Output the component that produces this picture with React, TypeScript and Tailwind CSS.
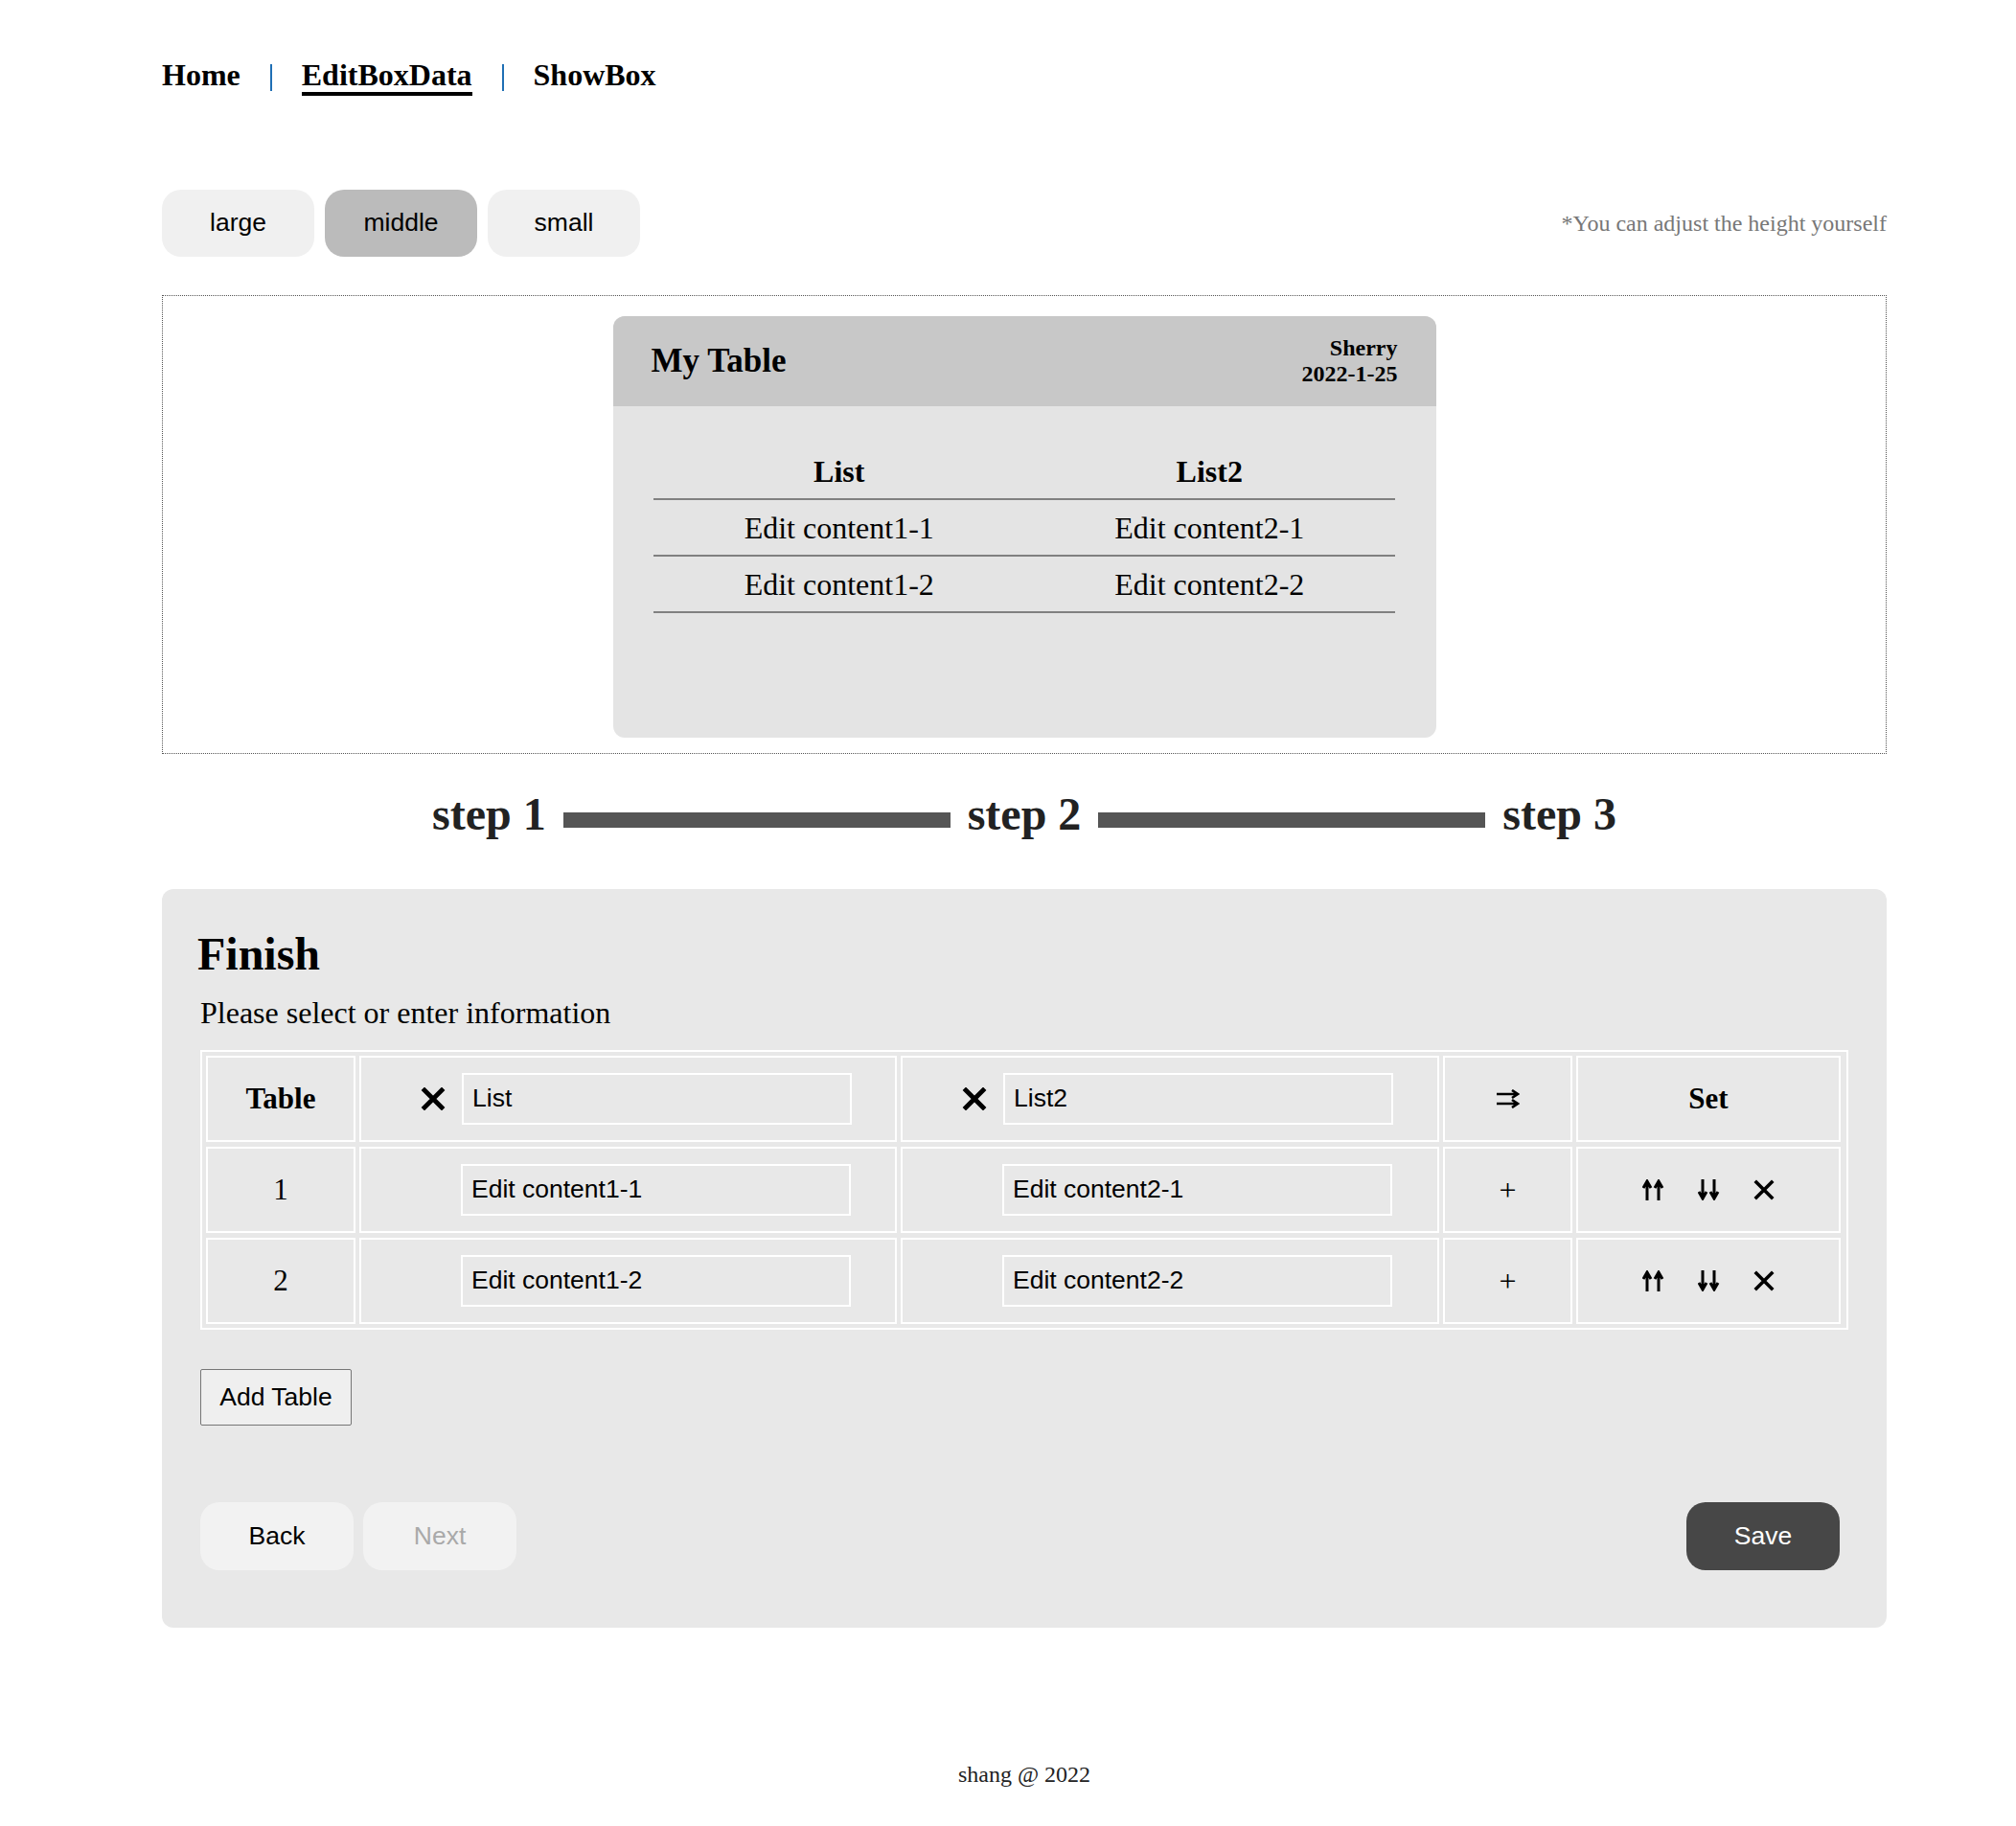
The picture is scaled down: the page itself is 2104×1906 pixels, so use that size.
import React from "react";

const rows = [
  { id: 1, a: "Edit content1-1", b: "Edit content2-1" },
  { id: 2, a: "Edit content1-2", b: "Edit content2-2" },
];

function BoldX({ size = 26 }: { size?: number }) {
  return (
    <svg width={size} height={size - 2} viewBox="0 0 26 24">
      <path d="M4 3 L22 21 M22 3 L4 21" stroke="#000" strokeWidth="4.8" strokeLinecap="square" fill="none" />
    </svg>
  );
}

function SmallX() {
  return (
    <svg width="22" height="22" viewBox="0 0 22 22">
      <path d="M3 3 L19 19 M19 3 L3 19" stroke="#000" strokeWidth="3.6" strokeLinecap="square" fill="none" />
    </svg>
  );
}

function UpUp() {
  return (
    <svg width="23" height="22" viewBox="0 0 23 22">
      <path d="M5 22 V3 M17 22 V3 M1 9 L5 2 L9 9 M13 9 L17 2 L21 9" stroke="#000" strokeWidth="3" fill="none" />
    </svg>
  );
}

function DownDown() {
  return (
    <svg width="23" height="22" viewBox="0 0 23 22">
      <path d="M5 0 V19 M17 0 V19 M1 13 L5 20 L9 13 M13 13 L17 20 L21 13" stroke="#000" strokeWidth="3" fill="none" />
    </svg>
  );
}

function RightRight() {
  return (
    <svg width="25" height="20" viewBox="0 0 25 20">
      <path d="M1 5 H23 M1 15 H23 M17 1 L23 5 L17 9 M17 11 L23 15 L17 19" stroke="#000" strokeWidth="2.6" fill="none" />
    </svg>
  );
}

function Cell({ children, className = "" }: { children?: React.ReactNode; className?: string }) {
  return (
    <div className={`h-[90px] border-2 border-white flex items-center ${className}`}>{children}</div>
  );
}

function Field({ value }: { value: string }) {
  return (
    <div className="w-[407px] h-[54px] border-2 border-white flex items-center pl-[9px] font-['Liberation_Sans',Arial,sans-serif] text-[26.5px] text-black">
      {value}
    </div>
  );
}

export default function App() {
  return (
    <div className="min-h-[1906px] bg-white font-['Liberation_Serif','Times_New_Roman',serif] text-black">
      <div className="ml-[169px] w-[1800px] pb-[40px]">
        {/* Nav */}
        <nav className="flex items-start gap-[31px] pt-[60px] text-[32px] font-bold leading-[36px]">
          <span>Home</span>
          <span className="mt-[7px] h-[28px] w-[2px] bg-[#1f6fb5]" />
          <span className="inline-block border-b-4 border-black">EditBoxData</span>
          <span className="mt-[7px] h-[28px] w-[2px] bg-[#1f6fb5]" />
          <span>ShowBox</span>
        </nav>

        {/* Size buttons */}
        <div className="mt-[98px] flex items-center justify-between">
          <div className="flex gap-[11px] font-['Liberation_Sans',Arial,sans-serif] text-[26.5px]">
            <button className="w-[159px] h-[70px] rounded-[20px] bg-[#f0f0f0]">large</button>
            <button className="w-[159px] h-[70px] rounded-[20px] bg-[#bbbbbb]">middle</button>
            <button className="w-[159px] h-[70px] rounded-[20px] bg-[#f0f0f0]">small</button>
          </div>
          <span className="text-[24px] text-[#777]">*You can adjust the height yourself</span>
        </div>

        {/* Preview */}
        <div className="mt-[40px] border border-dotted border-[#555] pt-[21px] pb-[16px] flex justify-center">
          <div className="w-[859px] h-[440px] rounded-xl bg-[#e4e4e4] overflow-hidden">
            <div className="h-[94px] bg-[#c8c8c8] flex items-center justify-between pl-[40px] pr-[40px]">
              <span className="text-[35px] font-bold">My Table</span>
              <div className="text-right text-[24px] font-bold leading-[27px]">
                <div>Sherry</div>
                <div>2022-1-25</div>
              </div>
            </div>
            <div className="mx-auto mt-[39px] w-[90%] text-[32px]">
              <div className="grid grid-cols-2 h-[59px] border-b-2 border-[#808080] items-center text-center font-bold">
                <span>List</span>
                <span>List2</span>
              </div>
              {rows.map((r) => (
                <div key={r.id} className="grid grid-cols-2 h-[59px] border-b-2 border-[#808080] items-center text-center">
                  <span>{r.a}</span>
                  <span>{r.b}</span>
                </div>
              ))}
            </div>
          </div>
        </div>

        {/* Steps */}
        <div className="mt-[35px] flex items-start justify-center gap-[18px] text-[48px] font-bold leading-[56px] text-[#222]">
          <span>step 1</span>
          <span className="mt-[26px] h-[16px] w-[404px] bg-[#555]" />
          <span>step 2</span>
          <span className="mt-[26px] h-[16px] w-[404px] bg-[#555]" />
          <span>step 3</span>
        </div>

        {/* Finish panel */}
        <div className="mt-[50px] rounded-xl bg-[#e8e8e8] pt-[40px] pb-[60px] px-[40px]">
          <h1 className="text-[48px] font-bold leading-[56px] -ml-[3px]">Finish</h1>
          <p className="mt-[15px] text-[32px] leading-[36px]">Please select or enter information</p>

          <div className="mt-[21px] border-2 border-white p-[4px] grid grid-cols-[156px_561px_562px_135px_276px] gap-x-[4px] gap-y-[5px] text-[31px]">
            <Cell className="justify-center font-bold">Table</Cell>
            <Cell className="pl-[62px]">
              <BoldX />
              <div className="ml-[17px]">
                <Field value="List" />
              </div>
            </Cell>
            <Cell className="pl-[62px]">
              <BoldX />
              <div className="ml-[17px]">
                <Field value="List2" />
              </div>
            </Cell>
            <Cell className="justify-center">
              <RightRight />
            </Cell>
            <Cell className="justify-center font-bold">Set</Cell>

            {rows.map((r) => (
              <React.Fragment key={r.id}>
                <Cell className="justify-center">{r.id}</Cell>
                <Cell className="pl-[104px]">
                  <Field value={r.a} />
                </Cell>
                <Cell className="pl-[104px]">
                  <Field value={r.b} />
                </Cell>
                <Cell className="justify-center text-[32px]">+</Cell>
                <Cell className="justify-center gap-[35px]">
                  <UpUp />
                  <DownDown />
                  <SmallX />
                </Cell>
              </React.Fragment>
            ))}
          </div>

          <button className="mt-[41px] w-[158px] h-[59px] rounded-[2px] border border-[#767676] bg-[#efefef] font-['Liberation_Sans',Arial,sans-serif] text-[26.5px]">
            Add Table
          </button>

          <div className="mt-[80px] flex items-center justify-between font-['Liberation_Sans',Arial,sans-serif] text-[26.5px]">
            <div className="flex gap-[10px]">
              <button className="w-[160px] h-[71px] rounded-[20px] bg-[#f2f2f2]">Back</button>
              <button className="w-[160px] h-[71px] rounded-[20px] bg-[#f2f2f2] text-[#a9a9a9]">Next</button>
            </div>
            <button className="mr-[9px] w-[160px] h-[71px] rounded-[20px] bg-[#474747] text-white">Save</button>
          </div>
        </div>

        {/* Footer */}
        <footer className="mt-[139px] text-center text-[24px] leading-[28px] text-[#222]">shang @ 2022</footer>
      </div>
    </div>
  );
}
